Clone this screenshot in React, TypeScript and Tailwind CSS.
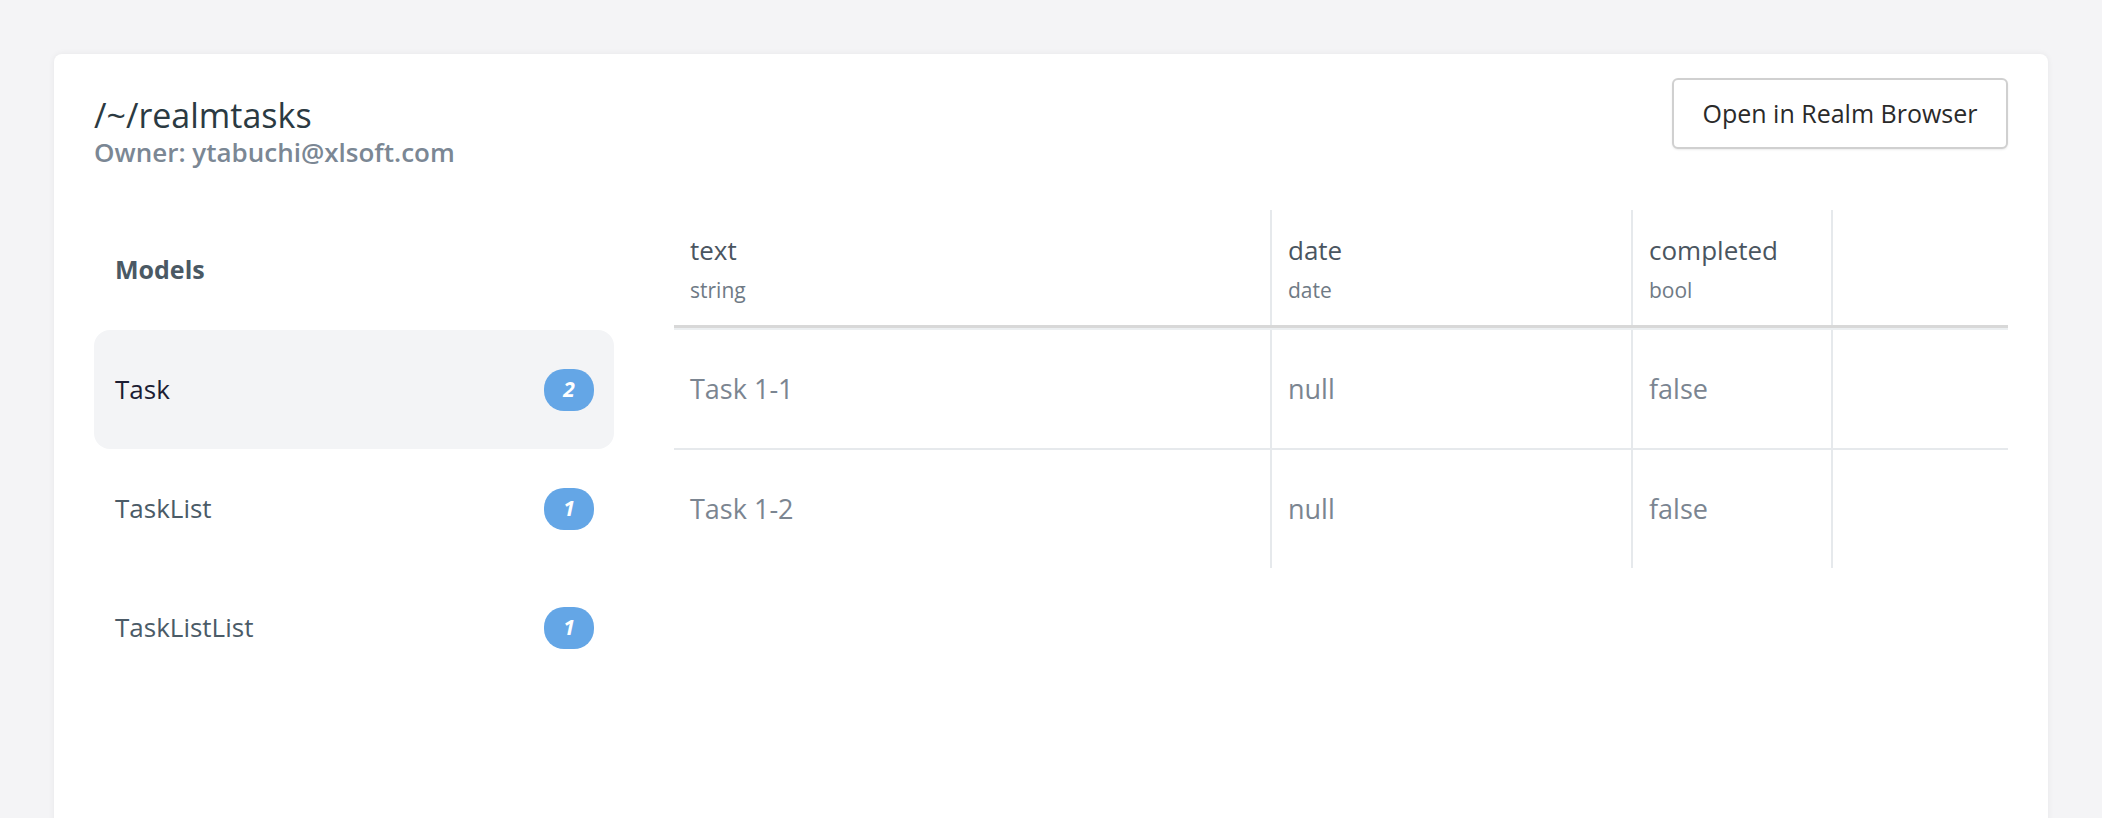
import React from "react";

const models = [
  { name: "Task", count: 2, active: true },
  { name: "TaskList", count: 1, active: false },
  { name: "TaskListList", count: 1, active: false },
];

const rows = [
  { text: "Task 1-1", date: "null", completed: "false" },
  { text: "Task 1-2", date: "null", completed: "false" },
];

export default function App() {
  return (
    <div
      className="min-h-screen w-full bg-[#f4f4f6] px-[54px] pt-[54px] overflow-hidden"
      style={{ fontFamily: "'Open Sans', Lato, sans-serif" }}
    >
      <div className="h-[820px] rounded-[8px] bg-white px-[40px] pt-[24px] shadow-[0_0_6px_rgba(0,0,0,0.06)]">
        {/* header */}
        <div className="flex items-start justify-between">
          <div className="pt-[17px]">
            <div className="text-[34px] leading-[40px] text-[#2b3a42]">/~/realmtasks</div>
            <div className="mt-[1px] text-[26px] font-semibold leading-[32px] text-[#7b8794]">
              Owner: ytabuchi@xlsoft.com
            </div>
          </div>
          <button className="h-[71px] w-[336px] rounded-[6px] border-2 border-[#d0d0d0] bg-white text-[25px] text-[#2a2a2a] shadow-[0_1px_2px_rgba(0,0,0,0.08)]">
            Open in Realm Browser
          </button>
        </div>

        {/* body */}
        <div className="mt-[42px] flex gap-[60px]">
          {/* sidebar */}
          <div className="w-[520px] shrink-0">
            <div className="flex h-[120px] items-center px-[21px] text-[25px] font-bold text-[#4a5964]">
              Models
            </div>
            {models.map((m) => (
              <div
                key={m.name}
                className={
                  m.active
                    ? "flex h-[119px] items-center justify-between rounded-[16px] bg-[#f3f4f6] pl-[21px] pr-[20px]"
                    : "flex h-[119px] items-center justify-between rounded-[16px] pl-[21px] pr-[20px]"
                }
              >
                <span
                  className={
                    m.active ? "text-[26px] text-[#1b1d33]" : "text-[26px] text-[#4b5b67]"
                  }
                >
                  {m.name}
                </span>
                <span className="flex h-[42px] w-[50px] items-center justify-center rounded-[20px] bg-[#64a6e6] text-[21px] font-bold italic text-white">
                  {m.count}
                </span>
              </div>
            ))}
          </div>

          {/* table */}
          <div className="flex-1">
            <div className="grid grid-cols-[598px_361px_200px_1fr] border-b-[3px] border-[#d8d8d8]">
              {[
                { n: "text", t: "string" },
                { n: "date", t: "date" },
                { n: "completed", t: "bool" },
                { n: "", t: "" },
              ].map((c, i) => (
                <div
                  key={i}
                  className={
                    i < 3
                      ? "h-[115px] border-r-2 border-[#e6e9ec] pl-[16px] pt-[24px]"
                      : "h-[115px] pl-[16px] pt-[24px]"
                  }
                >
                  <div className="text-[26px] leading-[32px] text-[#4a5560]">{c.n}</div>
                  <div className="mt-[12px] text-[21px] leading-[24px] text-[#6f7a85]">{c.t}</div>
                </div>
              ))}
            </div>
            <div className="h-[2px] bg-[#eceff1]" />
            {rows.map((r, ri) => (
              <div
                key={ri}
                className={
                  ri === 0
                    ? "grid grid-cols-[598px_361px_200px_1fr] border-b-2 border-[#e6e9ec]"
                    : "grid grid-cols-[598px_361px_200px_1fr]"
                }
              >
                {[r.text, r.date, r.completed, ""].map((v, i) => (
                  <div
                    key={i}
                    className={
                      i < 3
                        ? "flex h-[118px] items-center border-r-2 border-[#e6e9ec] pl-[16px] text-[27px] text-[#7b8591]"
                        : "flex h-[118px] items-center pl-[16px] text-[27px] text-[#7b8591]"
                    }
                  >
                    {v}
                  </div>
                ))}
              </div>
            ))}
          </div>
        </div>
      </div>
    </div>
  );
}
